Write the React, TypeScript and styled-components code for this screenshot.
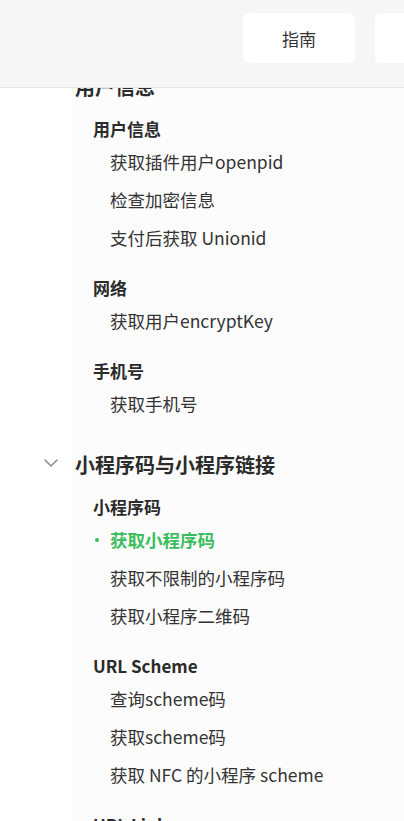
import styled, {createGlobalStyle} from "styled-components";
import {ChevronDown} from "lucide-react";

const GlobalStyle = createGlobalStyle`
    html, body {
        margin: 0;
        padding: 0;
        height: 100%;
        overflow: hidden;
    }

    body {
        font-family: "Noto Sans CJK SC", "Noto Sans", sans-serif;
        color: #333;
        background: linear-gradient(to right, #ffffff 71px, #fcfcfc 71px);
    }
`;

const Header = styled.header`
    position: fixed;
    top: 0;
    left: 0;
    right: 0;
    z-index: 10;
    height: 88px;
    box-sizing: border-box;
    display: flex;
    gap: 20px;
    padding: 13px 0 0 243px;
    background-color: #f6f6f6;
    border-bottom: 1px solid #e6e6e6;
    overflow: hidden;
`;

const NavButton = styled.div`
    flex-shrink: 0;
    width: 112px;
    height: 50px;
    display: flex;
    align-items: center;
    justify-content: center;
    background: #fff;
    border-radius: 6px;
    font-size: 17px;
    color: #333;
`;

const Nav = styled.nav`
    padding-top: 72px;
`;

const Section = styled.section`
    & + & {
        margin-top: 27px;
    }
`;

const SectionTitle = styled.div`
    position: relative;
    height: 30px;
    line-height: 30px;
    padding-left: 75px;
    font-size: 20px;
    font-weight: 700;
    color: #2b2b2b;
    white-space: nowrap;

    svg {
        position: absolute;
        left: 39px;
        top: 1px;
        color: #8a8a8a;
    }
`;

const GroupList = styled.div`
    display: flex;
    flex-direction: column;
    gap: 17px;
    margin-top: 13px;
`;

const GroupTitle = styled.div`
    height: 28px;
    line-height: 28px;
    padding-left: 93px;
    font-size: 17px;
    font-weight: 700;
    color: #2b2b2b;
    white-space: nowrap;
`;

const Item = styled.div<{ $active?: boolean }>`
    position: relative;
    height: 38px;
    line-height: 38px;
    padding-left: 110px;
    font-size: 17.5px;
    font-weight: ${p => p.$active ? 700 : 400};
    color: ${p => p.$active ? '#3bbd5d' : '#333'};
    white-space: nowrap;

    &::before {
        content: "";
        display: ${p => p.$active ? 'block' : 'none'};
        position: absolute;
        left: 95px;
        top: 17px;
        width: 4px;
        height: 4px;
        border-radius: 50%;
        background: #3bbd5d;
    }
`;

type NavGroup = { title: string; items: { label: string; active?: boolean }[] };
type NavSection = { title: string; open?: boolean; groups: NavGroup[] };

const sections: NavSection[] = [
    {
        title: '用户信息',
        groups: [
            {title: '用户信息', items: [{label: '获取插件用户openpid'}, {label: '检查加密信息'}, {label: '支付后获取 Unionid'}]},
            {title: '网络', items: [{label: '获取用户encryptKey'}]},
            {title: '手机号', items: [{label: '获取手机号'}]},
        ],
    },
    {
        title: '小程序码与小程序链接',
        open: true,
        groups: [
            {
                title: '小程序码',
                items: [{label: '获取小程序码', active: true}, {label: '获取不限制的小程序码'}, {label: '获取小程序二维码'}],
            },
            {
                title: 'URL Scheme',
                items: [{label: '查询scheme码'}, {label: '获取scheme码'}, {label: '获取 NFC 的小程序 scheme'}],
            },
            {title: 'URL Link', items: [{label: '查询 URL Link'}, {label: '获取 URL Link'}]},
        ],
    },
];

export default function App() {
    return (
        <>
            <GlobalStyle/>
            <Header>
                <NavButton>指南</NavButton>
                <NavButton>教程</NavButton>
            </Header>
            <Nav>
                {sections.map(section => (
                    <Section key={section.title}>
                        <SectionTitle>
                            {section.open && <ChevronDown size={24} strokeWidth={1.5}/>}
                            {section.title}
                        </SectionTitle>
                        <GroupList>
                            {section.groups.map(group => (
                                <div key={group.title}>
                                    <GroupTitle>{group.title}</GroupTitle>
                                    {group.items.map(item => (
                                        <Item key={item.label} $active={item.active}>{item.label}</Item>
                                    ))}
                                </div>
                            ))}
                        </GroupList>
                    </Section>
                ))}
            </Nav>
        </>
    );
}
